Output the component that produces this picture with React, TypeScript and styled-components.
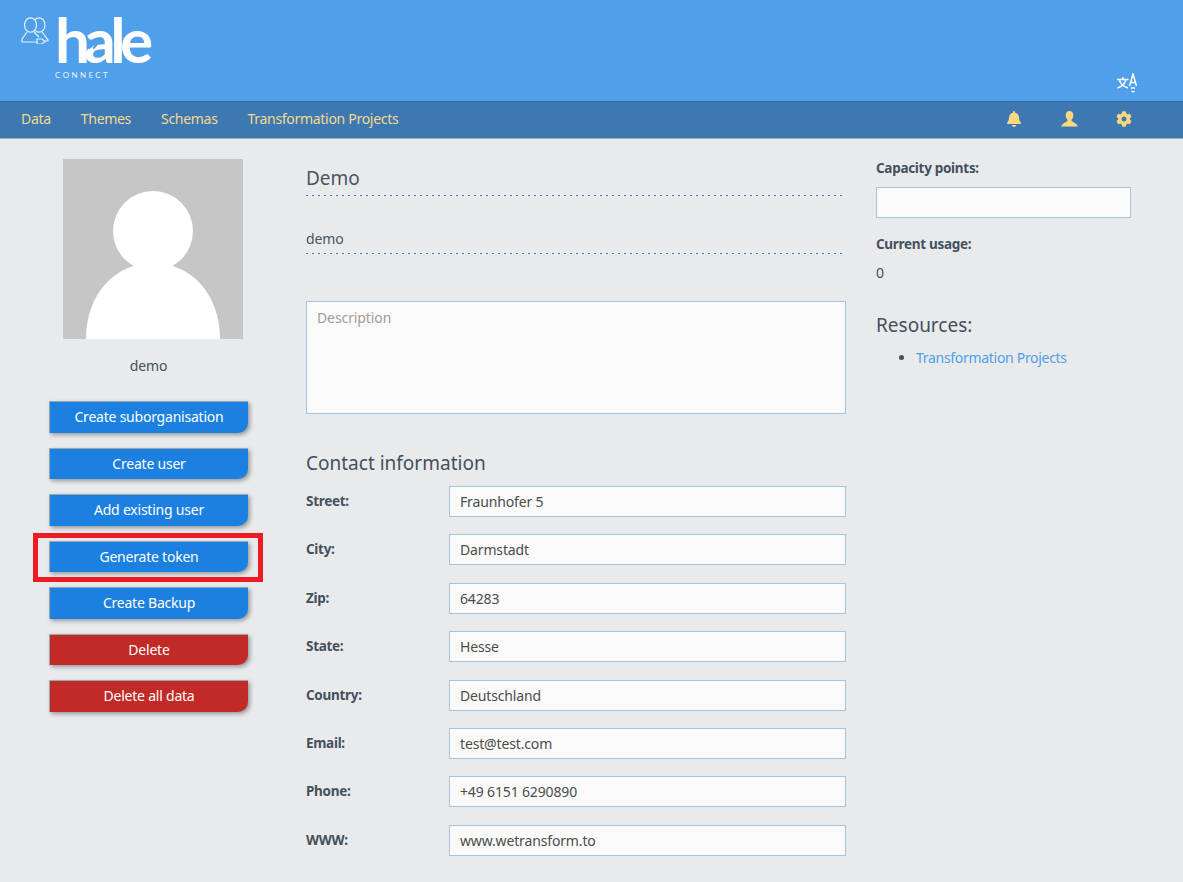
import { createGlobalStyle, styled } from 'styled-components';
import { FaBell, FaCog } from 'react-icons/fa';

const GlobalStyle = createGlobalStyle`
    html, body {
        margin: 0;
        background: #e9eaec;
        color: #44505c;
        font-family: "Noto Sans", "Open Sans", sans-serif;
        font-size: 14px;
    }
    * { box-sizing: border-box; }
`;

const contactRows = [
    ['Street:', 'Fraunhofer 5'],
    ['City:', 'Darmstadt'],
    ['Zip:', '64283'],
    ['State:', 'Hesse'],
    ['Country:', 'Deutschland'],
    ['Email:', 'test@test.com'],
    ['Phone:', '+49 6151 6290890'],
    ['WWW:', 'www.wetransform.to'],
];

const actions = [
    { label: 'Create suborganisation' },
    { label: 'Create user' },
    { label: 'Add existing user' },
    { label: 'Generate token', marked: true },
    { label: 'Create Backup' },
    { label: 'Delete', danger: true },
    { label: 'Delete all data', danger: true },
];

const Page = styled.div`
    width: 1183px;
    height: 882px;
    overflow: hidden;
`;

const Header = styled.header`
    height: 101px;
    background: #4f9fea;
    display: flex;
    justify-content: space-between;
    padding: 14px 44px 0 21px;
`;

const Logo = styled.div`
    display: flex;
    align-items: flex-start;
    color: #fff;
`;

const PeopleMark = styled.svg`
    margin: 3px 6px 0 0;
`;

const Wordmark = styled.div`
    position: relative;
    display: flex;
    flex-direction: column;
`;

const Hale = styled.div`
    font-family: "Lato", sans-serif;
    font-size: 62px;
    line-height: 50px;
    height: 50px;
    letter-spacing: -5.6px;
    font-weight: 700;
`;

const Connect = styled.div`
    font-family: "Lato", sans-serif;
    font-size: 8px;
    letter-spacing: 2.4px;
    line-height: 10px;
    margin: 6px 0 0 0;
    opacity: 0.9;
`;

const ArrowNotch = styled.svg`
    position: absolute;
    left: 33px;
    top: 27px;
`;

const TranslateButton = styled.div`
    align-self: flex-end;
    margin-bottom: 8px;
    line-height: 0;
`;

const Nav = styled.nav`
    height: 38px;
    background: #3e78b2;
    border-top: 1px solid #36689b;
    border-bottom: 1px solid #a9acae;
    display: flex;
    align-items: center;
    justify-content: space-between;
    padding: 0 51px 3px 21px;
`;

const NavLinks = styled.div`
    display: flex;
    gap: 30px;
`;

const NavLink = styled.a`
    color: #f5d98b;
    font-size: 14px;
    letter-spacing: -0.3px;
`;

const NavIcons = styled.div`
    display: flex;
    align-items: center;
    gap: 38.5px;
    color: #f8d781;
    font-size: 16px;
    line-height: 0;
`;

const Content = styled.main`
    display: grid;
    grid-template-columns: 257px 570px 255px;
    padding: 20px 0 0 49px;
`;

const Side = styled.aside`
    width: 199px;
    display: flex;
    flex-direction: column;
    align-items: center;
`;

const Avatar = styled.div`
    width: 180px;
    height: 180px;
    margin-left: 9px;
    line-height: 0;
    background: #c6c6c6;
`;

const SideName = styled.div`
    margin: 17px 0 25px;
    line-height: 20px;
    letter-spacing: -0.1px;
`;

const Actions = styled.div`
    display: flex;
    flex-direction: column;
    gap: 15px;
    width: 199px;
`;

const ActionButton = styled.button<{ $danger?: boolean }>`
    height: 31.5px;
    width: 100%;
    border: 1px solid #9aa8b4;
    border-width: 1px 0 0 1px;
    border-bottom-right-radius: 10px;
    background: ${(p) => (p.$danger ? '#c12a26' : '#1c80e0')};
    color: #fff;
    font: inherit;
    letter-spacing: -0.22px;
    padding: 0 0 0.6px;
    box-shadow: 2px 2px 4px rgba(0, 0, 0, 0.35);
`;

const ActionSlot = styled.div`
    position: relative;
`;

const Marker = styled.div`
    position: absolute;
    inset: -8px -15px -10px -16px;
    border: 5px solid #ed1c24;
    pointer-events: none;
`;

const Middle = styled.section`
    width: 540px;
    display: flex;
    flex-direction: column;
`;

const dottedRule = `
    background-image: linear-gradient(to right, #3e78b2 2px, transparent 2px);
    background-size: 6px 1px;
    background-repeat: repeat-x;
    background-position: left bottom;
`;

const Title = styled.h2`
    margin: 0;
    height: 37px;
    padding-top: 6px;
    font-size: 19px;
    line-height: 26px;
    font-weight: 400;
    color: #4c5560;
    ${dottedRule}
`;

const Slug = styled.div`
    height: 58px;
    padding-top: 33px;
    line-height: 20px;
    letter-spacing: -0.1px;
    color: #4c5560;
    ${dottedRule}
`;

const Description = styled.div`
    margin-top: 47px;
    height: 113px;
    background: #fafafa;
    border: 1px solid #a4c4e4;
    padding: 6px 10px;
    line-height: 20px;
    letter-spacing: -0.1px;
    color: #a39c98;
`;

const Subtitle = styled.h3`
    margin: 36px 0 10px;
    font-size: 19px;
    line-height: 26px;
    font-weight: 400;
    color: #44505c;
`;

const Contact = styled.div`
    display: flex;
    flex-direction: column;
    gap: 17.4px;
`;

const Row = styled.div`
    display: grid;
    grid-template-columns: 143px 397px;
    height: 31px;
`;

const Label = styled.label`
    font-weight: 700;
    font-size: 13.5px;
    line-height: 30px;
    letter-spacing: -0.3px;
`;

const Field = styled.div`
    height: 31px;
    background: #fafafa;
    border: 1px solid #a4c4e4;
    padding: 0 10px;
    line-height: 29px;
    color: #4c4c4c;
    letter-spacing: -0.15px;
`;

const Right = styled.aside`
    display: flex;
    flex-direction: column;
`;

const RightLabel = styled.div`
    font-weight: 700;
    font-size: 13.5px;
    line-height: 20px;
    letter-spacing: -0.3px;
`;

const CapacityLabel = styled(RightLabel)`
    margin-top: -1px;
`;

const CapacityField = styled(Field)`
    margin: 9px 0 16px;
`;

const Usage = styled.div`
    margin-top: 9px;
    line-height: 20px;
`;

const ResourcesTitle = styled.h3`
    margin: 29px 0 0;
    font-size: 19px;
    line-height: 26px;
    font-weight: 400;
`;

const ResourceList = styled.ul`
    margin: 10px 0 0;
    padding-left: 40px;
    line-height: 20px;
`;

const ResourceLink = styled.a`
    color: #4f9fea;
    letter-spacing: -0.3px;
`;

const PeopleIcon = () => (
    <PeopleMark width="28" height="27" viewBox="0 0 28 27" fill="none" stroke="#e8f2fc" strokeWidth="1.2">
        <ellipse cx="18" cy="8" rx="6" ry="7.200" />
        <path d="M21 15l6 8v1h-3" />
        <ellipse cx="9.500" cy="8" rx="6" ry="7.200" fill="#4f9fea" />
        <path d="M6 15 1 22v3h15" fill="#4f9fea" />
        <path d="M13 15l5 5" />
        <path d="M16 22h5l3 2.500-3 2.500h-5z" fill="#4f9fea" />
    </PeopleMark>
);

const TranslateIcon = () => (
    <svg width="22" height="20" viewBox="0 0 22 20" fill="none" stroke="#fff" strokeWidth="1.5">
        <path d="M0 6.500h11.500M5.700 4v2.500M9 6.500c-1 4-4 7-8.500 8.500M2.500 7.500c1 3 4 6 8.500 7.500" />
        <path d="M12.500 13 16 1 19.500 13M13.500 9.500h5" />
        <path d="M14 15.500q2-1.500 4 0M14.500 18q1.500 1.500 3 0" />
    </svg>
);

const UserBust = () => (
    <svg width="17" height="16" viewBox="0 0 17 16" fill="currentColor">
        <path d="M8.500 0C6.100 0 4.700 1.900 4.700 4.300c0 1.800.7 3.300 1.700 4.300v1.500C4.600 11.500 1.500 12.300 0 15.600h17c-1.500-3.300-4.600-4.100-6.400-5.500V8.600c1-1 1.700-2.500 1.700-4.300C12.300 1.900 10.900 0 8.500 0z" />
    </svg>
);

const AvatarImage = () => (
    <svg width="180" height="180" viewBox="0 0 180 180" fill="#fff">
        <circle cx="90" cy="72" r="40" />
        <path d="M23 180c0-46 30-76 67-76s67 30 67 76z" />
    </svg>
);

const App = () => (
    <Page>
        <GlobalStyle />
        <Header>
            <Logo>
                <PeopleIcon />
                <Wordmark>
                    <Hale>hale</Hale>
                    <ArrowNotch width="11" height="9" viewBox="0 0 11 9" fill="none" stroke="#4f9fea" strokeWidth="2">
                        <path d="M1 1.500l3 3-3 3M5 1.500l3 3-3 3" />
                    </ArrowNotch>
                    <Connect>CONNECT</Connect>
                </Wordmark>
            </Logo>
            <TranslateButton>
                <TranslateIcon />
            </TranslateButton>
        </Header>
        <Nav>
            <NavLinks>
                <NavLink>Data</NavLink>
                <NavLink>Themes</NavLink>
                <NavLink>Schemas</NavLink>
                <NavLink>Transformation Projects</NavLink>
            </NavLinks>
            <NavIcons>
                <FaBell />
                <UserBust />
                <FaCog />
            </NavIcons>
        </Nav>
        <Content>
            <Side>
                <Avatar>
                    <AvatarImage />
                </Avatar>
                <SideName>demo</SideName>
                <Actions>
                    {actions.map(({ label, danger, marked }) => (
                        <ActionSlot key={label}>
                            <ActionButton $danger={danger}>{label}</ActionButton>
                            {marked && <Marker />}
                        </ActionSlot>
                    ))}
                </Actions>
            </Side>
            <Middle>
                <Title>Demo</Title>
                <Slug>demo</Slug>
                <Description>Description</Description>
                <Subtitle>Contact information</Subtitle>
                <Contact>
                    {contactRows.map(([label, value]) => (
                        <Row key={label}>
                            <Label>{label}</Label>
                            <Field>{value}</Field>
                        </Row>
                    ))}
                </Contact>
            </Middle>
            <Right>
                <CapacityLabel>Capacity points:</CapacityLabel>
                <CapacityField />
                <RightLabel>Current usage:</RightLabel>
                <Usage>0</Usage>
                <ResourcesTitle>Resources:</ResourcesTitle>
                <ResourceList>
                    <li>
                        <ResourceLink>Transformation Projects</ResourceLink>
                    </li>
                </ResourceList>
            </Right>
        </Content>
    </Page>
);

export default App;
